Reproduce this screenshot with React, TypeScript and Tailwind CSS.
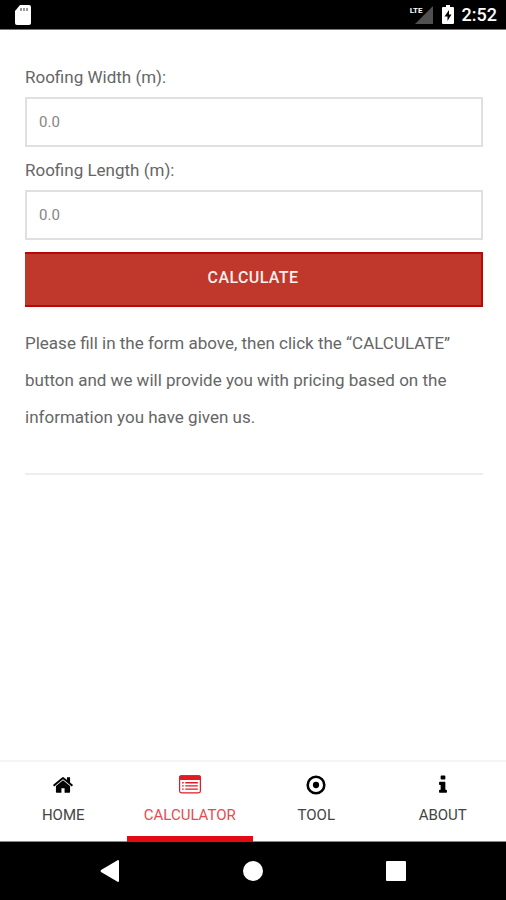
import type { ReactNode } from "react";

const fieldClass =
  "block h-[50px] w-full border-2 border-[#e0e0e0] bg-white px-3 pb-px text-[15px] text-[#666] outline-none placeholder:text-[#858585] placeholder:opacity-100";

function Field({ id, label }: { id: string; label: string }) {
  return (
    <div className="mb-[7px]">
      <label htmlFor={id} className="block h-9 text-[17px] leading-8 text-[#666]">
        {label}
      </label>
      <input id={id} type="text" inputMode="decimal" placeholder="0.0" className={fieldClass} />
    </div>
  );
}

function Icon({ children }: { children: ReactNode }) {
  return (
    <svg aria-hidden="true" viewBox="0 0 1792 1792" fill="currentColor" className="size-[22px]">
      {children}
    </svg>
  );
}

const tabs = [
  {
    label: "HOME",
    icon: (
      <path d="M1408 992v480q0 26-19 45t-45 19h-384v-384h-256v384h-384q-26 0-45-19t-19-45v-480q0-1 .5-3t.5-3l575-474 575 474q1 2 1 6zm223-69l-62 74q-8 9-21 11h-3q-13 0-21-7l-692-577-692 577q-12 8-24 7-13-2-21-11l-62-74q-8-10-7-23.5t11-21.5l719-599q32-26 76-26t76 26l244 204v-195q0-14 9-23t23-9h192q14 0 23 9t9 23v408l219 182q10 8 11 21.5t-7 23.5z" transform="translate(64 0)" />
    ),
  },
  {
    label: "CALCULATOR",
    active: true,
    icon: (
      <>
        <rect x="50" y="150" width="1692" height="1386" rx="150" fill="none" stroke="currentColor" strokeWidth="100" />
        <path d="M0 480V260q0-160 160-160h1472q160 0 160 160v220z" />
        <path d="M256 660h128v110H256zM512 660h1024v110H512zM256 916h128v110H256zM512 916h1024v110H512zM256 1172h128v110H256zM512 1172h1024v110H512z" />
      </>
    ),
  },
  {
    label: "TOOL",
    icon: (
      <>
        <circle cx="896" cy="896" r="676" fill="none" stroke="currentColor" strokeWidth="208" />
        <circle cx="896" cy="896" r="256" />
      </>
    ),
  },
  {
    label: "ABOUT",
    icon: (
      <path d="M1216 1344v128q0 26-19 45t-45 19h-512q-26 0-45-19t-19-45v-128q0-26 19-45t45-19h64v-384h-64q-26 0-45-19t-19-45v-128q0-26 19-45t45-19h384q26 0 45 19t19 45v576h64q26 0 45 19t19 45zm-128-1152v192q0 26-19 45t-45 19h-256q-26 0-45-19t-19-45v-192q0-26 19-45t45-19h256q26 0 45 19t19 45z" />
    ),
  },
];

function StatusBar() {
  return (
    <header className="flex h-[30px] items-center border-b border-[#777] bg-black pr-[9px] pl-[14px] text-white">
      <svg aria-hidden="true" viewBox="0 0 17 20" className="h-5 w-[17px]">
        <path d="M6 0h9q2 0 2 2v16q0 2-2 2H3q-2 0-2-2V6z" fill="#fff" />
        <path d="M7 3v3M10 3v3M13 3v3" stroke="#777" strokeWidth="1.5" />
      </svg>
      <div className="ml-auto flex items-center">
        <div className="flex items-start">
          <span className="text-[8px] leading-[9px] font-bold">LTE</span>
          <svg aria-hidden="true" viewBox="0 0 18 18" className="-ml-2 size-[18px]">
            <path d="M18 0v18H0z" fill="#505050" />
          </svg>
        </div>
        <svg aria-hidden="true" viewBox="0 0 12 19" className="ml-[9px] h-[19px] w-3">
          <path d="M4 0h4v2h3q1 0 1 1v15q0 1-1 1H1q-1 0-1-1V3q0-1 1-1h3z" fill="#fff" />
          <path d="M7 5 2.500 11.500H5.500V16L9.500 9.500H7z" fill="#000" />
        </svg>
        <time className="ml-2 text-[18px] leading-7 font-medium">2:52</time>
      </div>
    </header>
  );
}

export default function App() {
  return (
    <div className="flex min-h-screen flex-col bg-white font-[Roboto,sans-serif]">
      <StatusBar />
      <main className="flex-1 pt-[31px] pr-[23px] pl-[25px]">
        <form onSubmit={(event) => event.preventDefault()}>
          <Field id="roofing-width" label="Roofing Width (m):" />
          <Field id="roofing-length" label="Roofing Length (m):" />
          <button
            type="submit"
            className="mt-3 block h-[55px] w-full border-y-2 border-r-2 border-[#b80808] bg-[#bf382b] pb-1 text-[16px] font-medium tracking-wide text-[#fbeeee]"
          >
            CALCULATE
          </button>
        </form>
        <p className="mt-[18px] text-[17px] leading-[37px] text-[#666]">
          Please fill in the form above, then click the “CALCULATE” button and we will provide you with pricing based on
          the information you have given us.
        </p>
        <hr className="mt-[37px] border-t-2 border-[#eee]" />
      </main>
      <nav aria-label="Main" className="grid h-[82px] grid-cols-4 border-t-2 border-[#f5f5f5]">
        {tabs.map((tab) => (
          <a
            key={tab.label}
            href="#"
            aria-current={tab.active ? "page" : undefined}
            className={
              tab.active
                ? "flex flex-col items-center border-b-[6px] border-[#e30b13] pt-3 text-[#e01b24]"
                : "flex flex-col items-center border-b border-[#888] pt-3 text-black"
            }
          >
            <Icon>{tab.icon}</Icon>
            <span className={tab.active ? "mt-[9px] text-[15px] leading-5 text-[#e84a50]" : "mt-[9px] text-[15px] leading-5 text-[#444]"}>
              {tab.label}
            </span>
          </a>
        ))}
      </nav>
      <footer className="flex h-[58px] items-center justify-center gap-[123px] bg-black text-white">
        <button type="button" aria-label="Back">
          <svg aria-hidden="true" viewBox="0 0 20 22" fill="currentColor" className="h-[22px] w-5">
            <path d="M18 0q1 0 1 1v20q0 1-1 1L1 12q-1-1 0-2z" />
          </svg>
        </button>
        <button type="button" aria-label="Home">
          <svg aria-hidden="true" viewBox="0 0 20 20" fill="currentColor" className="size-5">
            <circle cx="10" cy="10" r="10" />
          </svg>
        </button>
        <button type="button" aria-label="Recent apps">
          <svg aria-hidden="true" viewBox="0 0 20 20" fill="currentColor" className="size-5">
            <rect width="20" height="20" rx="1" />
          </svg>
        </button>
      </footer>
    </div>
  );
}
